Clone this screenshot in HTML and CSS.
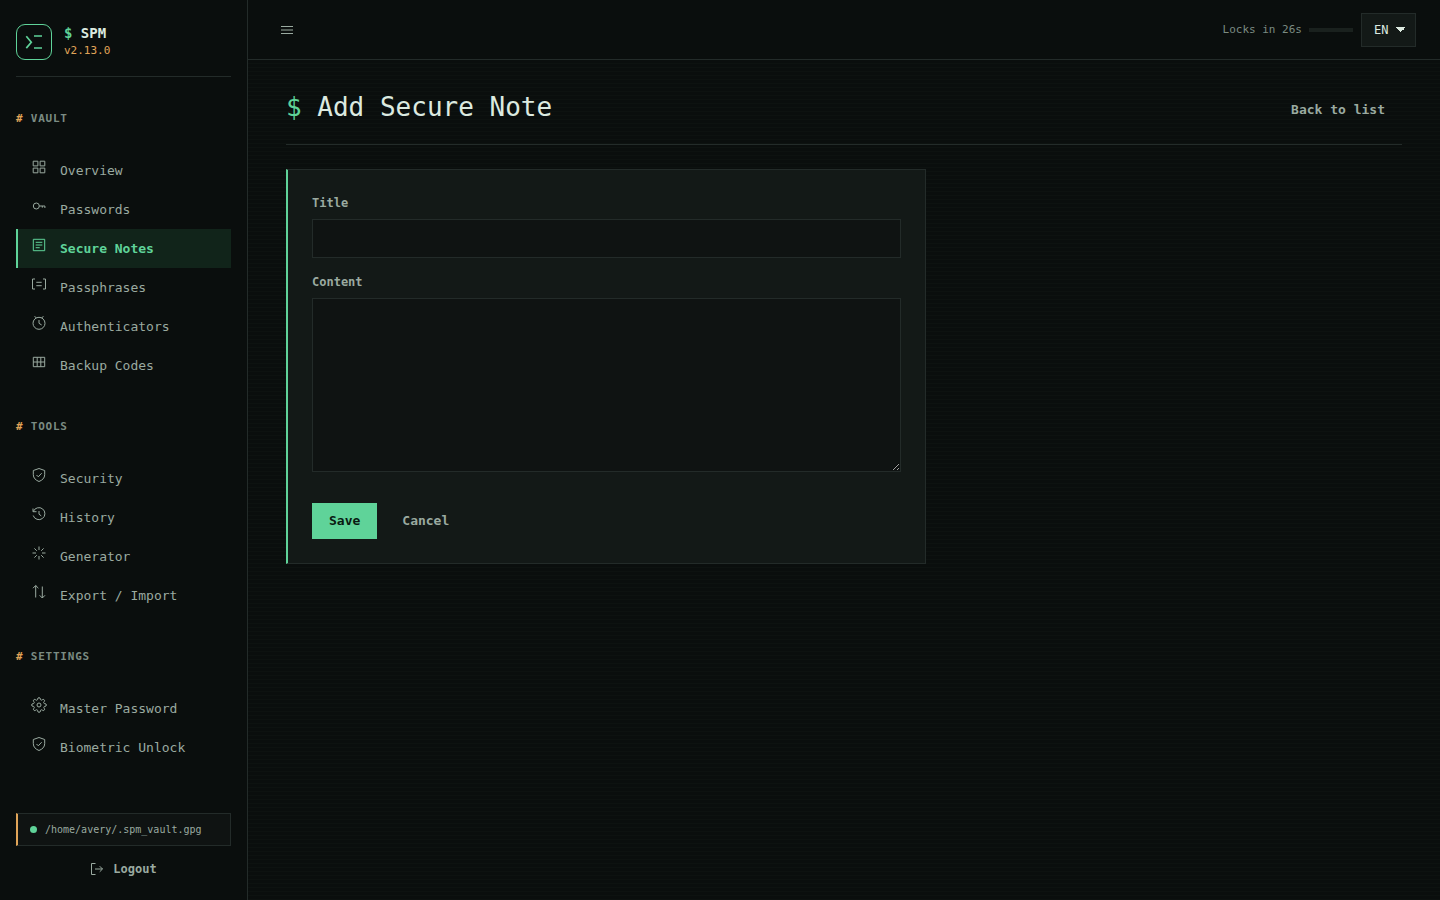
FILE: index.html
```html
<!DOCTYPE html>
<html lang="en">
<head>
<meta charset="utf-8">
<meta name="viewport" content="width=device-width, initial-scale=1">
<title>Add Secure Note - SPM</title>
<link rel="stylesheet" href="styles.css">
</head>
<body>
<div class="app">
  <aside class="sidebar">
    <div class="brand">
      <span class="brand-mark">
        <svg width="34" height="34" viewBox="0 0 34 34" class="icon-bold" aria-hidden="true"><path d="M9.300 11.300l5 5.900-5 5.900M17 11h8M17 23h8"/></svg>
      </span>
      <div>
        <div class="brand-name"><span class="prompt">$</span> SPM</div>
        <div class="brand-version">v2.13.0</div>
      </div>
    </div>

    <nav class="nav">
      <section class="nav-section">
        <h2 class="nav-heading">Vault</h2>
        <a class="nav-item" href="#"><svg class="icon" viewBox="0 0 16 16" aria-hidden="true"><path d="M2.200 2.200h4.700v4.700H2.200zM9.100 2.200h4.700v4.700H9.100zM2.200 9.100h4.700v4.700H2.200zM9.100 9.100h4.700v4.700H9.100z"/></svg>Overview</a>
        <a class="nav-item" href="#"><svg class="icon" viewBox="0 0 16 16" aria-hidden="true"><circle cx="5.300" cy="8" r="3"/><path d="M8.300 8h5.600v2M11.300 8v1.700"/></svg>Passwords</a>
        <a class="nav-item active" href="#" aria-current="page"><svg class="icon" viewBox="0 0 16 16" aria-hidden="true"><path d="M2.300 2.300h11.400v11.400H2.300zM4.700 5.300h6.600M4.700 8h6.600M4.700 10.700h4"/></svg>Secure Notes</a>
        <a class="nav-item" href="#"><svg class="icon" viewBox="0 0 16 16" aria-hidden="true"><path d="M4 3H1.500v10H4M12 3h2.500v10H12M5.300 6.300h5.400M5.300 9.700h5.400"/></svg>Passphrases</a>
        <a class="nav-item" href="#"><svg class="icon" viewBox="0 0 16 16" aria-hidden="true"><circle cx="8" cy="8.300" r="6"/><path d="M8 5v3.300l2.700 1.700M3.500 1.500L5.500 2.800M12.500 1.500L10.500 2.800"/></svg>Authenticators</a>
        <a class="nav-item" href="#"><svg class="icon" viewBox="0 0 16 16" aria-hidden="true"><path d="M2.300 3.300h11.400v9.400H2.300zM2.300 8h11.400M6.200 3.300v9.400M9.800 3.300v9.400"/></svg>Backup Codes</a>
      </section>
      <section class="nav-section">
        <h2 class="nav-heading">Tools</h2>
        <a class="nav-item" href="#"><svg class="icon" viewBox="0 0 16 16" aria-hidden="true"><path d="M8 1.500l5.700 2v4.200c0 3.300-2.300 5.500-5.700 6.800-3.400-1.300-5.700-3.500-5.700-6.800V3.500zM5.500 8l1.800 1.800 3.400-3.600"/></svg>Security</a>
        <a class="nav-item" href="#"><svg class="icon" viewBox="0 0 16 16" aria-hidden="true"><path d="M2 2.500v3.200h3.500M2.300 5.500A6 6 0 1 1 2.200 9.500M8 5v3.200l2.300 1.700"/></svg>History</a>
        <a class="nav-item" href="#"><svg class="icon" viewBox="0 0 16 16" aria-hidden="true"><path d="M8 1.500v3.500M8 11v3.500M1.500 8H5M11 8h3.500M3.400 3.400l2.400 2.400M10.200 10.200l2.400 2.400M12.600 3.400l-2.400 2.400M5.800 10.200l-2.400 2.400"/></svg>Generator</a>
        <a class="nav-item" href="#"><svg class="icon" viewBox="0 0 16 16" aria-hidden="true"><path d="M4.700 13.500v-12M2 4.200l2.700-2.700 2.700 2.700M11.300 2.500v11.500M8.600 11.300l2.700 2.700 2.700-2.700"/></svg>Export / Import</a>
      </section>
      <section class="nav-section">
        <h2 class="nav-heading">Settings</h2>
        <a class="nav-item" href="#"><svg class="icon gear" viewBox="0 0 24 24" aria-hidden="true"><circle cx="12" cy="12" r="3"/><path d="M19.400 15a1.650 1.650 0 0 0 .33 1.820l.06.06a2 2 0 1 1-2.830 2.830l-.06-.06a1.650 1.650 0 0 0-2.800 1.170V21a2 2 0 0 1-4 0v-.09a1.650 1.650 0 0 0-2.900-1.200l-.06.06a2 2 0 1 1-2.830-2.830l.06-.06A1.650 1.650 0 0 0 3.090 14H3a2 2 0 0 1 0-4h.09a1.650 1.650 0 0 0 1.200-2.900l-.06-.06a2 2 0 1 1 2.830-2.830l.06.06A1.650 1.650 0 0 0 10 3.090V3a2 2 0 0 1 4 0v.09a1.650 1.650 0 0 0 2.800 1.170l.06-.06a2 2 0 1 1 2.830 2.830l-.06.06A1.650 1.650 0 0 0 20.910 10H21a2 2 0 0 1 0 4h-.09a1.650 1.650 0 0 0-1.510 1z"/></svg>Master Password</a>
        <a class="nav-item" href="#"><svg class="icon" viewBox="0 0 16 16" aria-hidden="true"><path d="M8 1.500l5.700 2v4.200c0 3.300-2.300 5.500-5.700 6.800-3.400-1.300-5.700-3.500-5.700-6.800V3.500zM5.500 8l1.800 1.800 3.400-3.600"/></svg>Biometric Unlock</a>
      </section>
    </nav>

    <div class="sidebar-foot">
      <div class="vault-path"><span class="dot"></span>/home/avery/.spm_vault.gpg</div>
      <button class="logout" type="button"><svg class="icon-small" viewBox="0 0 14 14" aria-hidden="true"><path d="M5.500 1.500h-4v11h4M5 7h7.500M9.700 4.200L12.500 7 9.700 9.800"/></svg>Logout</button>
    </div>
  </aside>

  <div class="content">
    <header class="topbar">
      <button class="menu-button" type="button" aria-label="Toggle menu"><svg class="icon-small" viewBox="0 0 14 14" aria-hidden="true"><path d="M1 3.500h12M1 7h12M1 10.500h12"/></svg></button>
      <div class="topbar-tools">
        <div class="lock">
          <span class="lock-text">Locks in 26s</span>
          <span class="lock-track"></span>
        </div>
        <select class="language" aria-label="Language"><option>EN</option></select>
      </div>
    </header>

    <main class="main">
      <div class="page-head">
        <h1 class="page-title"><span class="prompt">$</span> Add Secure Note</h1>
        <a class="ghost" href="#">Back to list</a>
      </div>
      <form class="card">
        <label class="label" for="title">Title</label>
        <input class="field" id="title" type="text">
        <label class="label" for="content">Content</label>
        <textarea class="field area" id="content"></textarea>
        <div class="actions">
          <button class="save" type="button">Save</button>
          <a class="ghost" href="#">Cancel</a>
        </div>
      </form>
    </main>
  </div>
</div>
</body>
</html>
```
FILE: styles.css
```css
:root {
  --bg: #0a0e0d;
  --surface: #0f1312;
  --card: #131917;
  --line: #232b29;
  --text: #dceae0;
  --muted: #9aaaa0;
  --dim: #7b8b82;
  --accent: #5fd399;
  --amber: #e0a458;
}

* {
  box-sizing: border-box;
}

body {
  margin: 0;
  background: var(--bg);
  color: var(--text);
  font: 13px/20px "DejaVu Sans Mono", monospace;
  color-scheme: dark;
}

button,
input,
select,
textarea {
  font: inherit;
  color: inherit;
}

a {
  color: inherit;
  text-decoration: none;
}

svg {
  fill: none;
  stroke: currentColor;
  flex: none;
}

.app {
  display: grid;
  grid-template-columns: 248px 1fr;
  min-height: 100vh;
}

.sidebar {
  display: flex;
  flex-direction: column;
  padding: 24px 16px 18px;
  border-right: 1px solid var(--line);
}

.brand {
  display: flex;
  gap: 12px;
  padding-bottom: 16px;
  border-bottom: 1px solid var(--line);
}

.brand-mark {
  width: 36px;
  height: 36px;
  border: 1px solid var(--accent);
  border-radius: 9px;
  color: var(--accent);
}

.icon-bold {
  display: block;
  stroke-width: 1.700;
}

.brand-name {
  font-size: 14px;
  font-weight: 700;
  line-height: 18px;
}

.brand-version {
  font-size: 11px;
  line-height: 18px;
  color: var(--amber);
}

.prompt {
  color: var(--accent);
}

.nav {
  display: flex;
  flex-direction: column;
  gap: 33px;
  padding-top: 33px;
}

.nav-heading {
  margin: 0 0 23px;
  font-size: 11px;
  line-height: 18px;
  letter-spacing: 0.07em;
  text-transform: uppercase;
  color: var(--dim);
}

.nav-heading::before {
  content: "# ";
  color: var(--amber);
}

.nav-item {
  display: flex;
  gap: 13px;
  padding: 8px 12px 8px 13px;
  border-left: 2px solid transparent;
  line-height: 23px;
  color: var(--muted);
}

.nav-item.active {
  border-left-color: var(--accent);
  background: #11241a;
  font-weight: 700;
  color: var(--accent);
}

.icon {
  width: 16px;
  height: 16px;
}

.gear {
  stroke-width: 1.500;
}

.sidebar-foot {
  margin-top: auto;
}

.vault-path {
  display: flex;
  align-items: center;
  gap: 8px;
  padding: 8px 12px;
  border: 1px solid var(--line);
  border-left: 2px solid var(--amber);
  background: var(--surface);
  font-size: 10px;
  line-height: 15px;
  color: var(--muted);
}

.dot {
  width: 7px;
  height: 7px;
  border-radius: 50%;
  background: var(--accent);
}

.logout {
  display: flex;
  align-items: center;
  justify-content: center;
  gap: 9px;
  width: 100%;
  margin-top: 10px;
  padding: 5px;
  border: 0;
  background: none;
  font-size: 12px;
  font-weight: 700;
  line-height: 16px;
  color: var(--muted);
}

.icon-small {
  display: block;
  width: 14px;
  height: 14px;
}

.content {
  display: flex;
  flex-direction: column;
  min-width: 0;
}

.topbar {
  display: flex;
  align-items: center;
  justify-content: space-between;
  height: 60px;
  padding: 0 24px;
  border-bottom: 1px solid var(--line);
}

.menu-button {
  padding: 8px;
  border: 0;
  background: none;
  color: var(--muted);
}

.topbar-tools {
  display: flex;
  align-items: center;
  gap: 8px;
}

.lock {
  display: flex;
  align-items: center;
  gap: 7px;
}

.lock-text {
  font-size: 11px;
  color: var(--dim);
}

.lock-track {
  width: 44px;
  height: 4px;
  background: #1a211e;
}

.language {
  appearance: none;
  width: 55px;
  height: 34px;
  padding: 0 20px 0 12px;
  border: 1px solid var(--line);
  border-radius: 0;
  background-color: var(--card);
  background-image:
    linear-gradient(45deg, transparent 50%, var(--text) 50%),
    linear-gradient(135deg, var(--text) 50%, transparent 50%);
  background-position: right 14px center, right 9px center;
  background-repeat: no-repeat;
  background-size: 5px 5px;
  font-size: 12px;
}

.main {
  flex: 1;
  padding: 26px 38px 24px;
  background: repeating-linear-gradient(to bottom, transparent 0 3px, #0d1210 3px 4px);
}

.page-head {
  display: flex;
  align-items: flex-end;
  justify-content: space-between;
  margin-bottom: 24px;
  padding-bottom: 16px;
  border-bottom: 1px solid var(--line);
}

.page-title {
  margin: 0;
  font-size: 26px;
  font-weight: 400;
  line-height: 42px;
}

.ghost {
  padding: 8px 17px;
  font-weight: 700;
  color: var(--muted);
}

.card {
  max-width: 640px;
  padding: 24px;
  border: 1px solid var(--line);
  border-left: 2px solid var(--accent);
  background: var(--card);
}

.label {
  display: block;
  margin-bottom: 6px;
  font-size: 12px;
  font-weight: 700;
  line-height: 19px;
  color: var(--muted);
}

.field {
  display: block;
  width: 100%;
  height: 39px;
  margin-bottom: 15px;
  padding: 8px 12px;
  border: 1px solid var(--line);
  border-radius: 0;
  outline: 0;
  background: var(--surface);
}

.area {
  height: 174px;
  margin-bottom: 31px;
  resize: vertical;
}

.actions {
  display: flex;
  align-items: center;
  gap: 8px;
}

.save {
  padding: 8px 17px;
  border: 0;
  background: var(--accent);
  font-weight: 700;
  color: #0a1a12;
}
```
